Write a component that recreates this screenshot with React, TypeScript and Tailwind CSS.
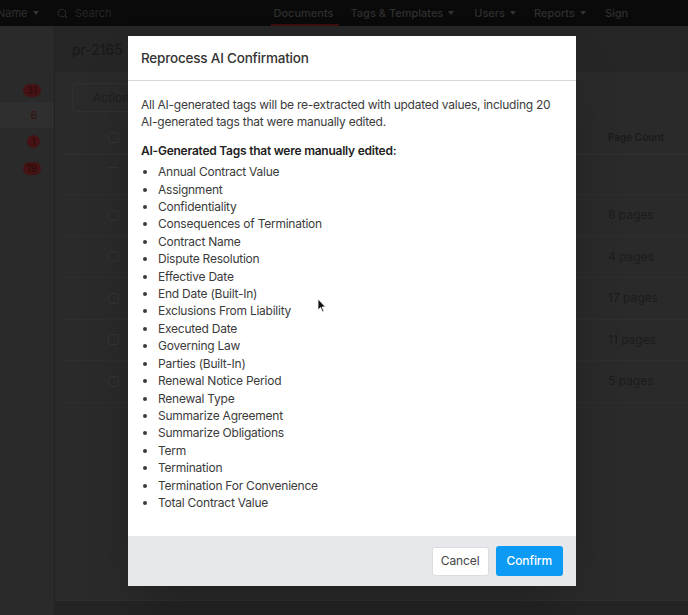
import React from 'react';

const tags = [
    'Annual Contract Value',
    'Assignment',
    'Confidentiality',
    'Consequences of Termination',
    'Contract Name',
    'Dispute Resolution',
    'Effective Date',
    'End Date (Built-In)',
    'Exclusions From Liability',
    'Executed Date',
    'Governing Law',
    'Parties (Built-In)',
    'Renewal Notice Period',
    'Renewal Type',
    'Summarize Agreement',
    'Summarize Obligations',
    'Term',
    'Termination',
    'Termination For Convenience',
    'Total Contract Value',
];

const pageRows = ['8 pages', '4 pages', '17 pages', '11 pages', '5 pages'];

const Caret = () => <span className="ml-[5px] inline-block border-x-[3px] border-t-[4px] border-x-transparent border-t-[#333] align-middle" />;

const App: React.FC = () => {
    return (
        <div className="relative h-[615px] w-[688px] overflow-hidden bg-[#262626] text-[12px]" style={{ fontFamily: 'Inter, "Noto Sans", sans-serif' }}>
            {/* navbar behind the overlay */}
            <div className="flex h-[26px] items-center bg-[#0a0a0a] text-[11px] text-[#2f2f2f]">
                <div className="flex w-[55px] items-center -ml-[3px]">Name<Caret /></div>
                <div className="flex items-center gap-[6px] pl-[4px]">
                    <svg width="13" height="13" viewBox="0 0 24 24" fill="none" stroke="#2a2a2a" strokeWidth="2"><circle cx="11" cy="11" r="7" /><path d="M20 20l-4-4" /></svg>
                    <span className="text-[#262626]">Search</span>
                </div>
                <div className="ml-[162px] flex h-full items-stretch font-medium">
                    <div className="relative flex items-center">
                        Documents
                        <div className="absolute bottom-0 left-[-3px] right-[-6px] h-[2px] bg-[#3a1010]" />
                    </div>
                    <div className="ml-[17px] flex items-center">Tags &amp; Templates<Caret /></div>
                    <div className="ml-[20px] flex items-center">Users<Caret /></div>
                    <div className="ml-[18px] flex items-center">Reports<Caret /></div>
                    <div className="ml-[19px] flex items-center">Sign</div>
                </div>
            </div>

            <div className="flex h-[589px]">
                {/* sidebar */}
                <div className="flex w-[55px] flex-col border-r border-[#222] bg-[#2a2a2a] pt-[52px]">
                    <div className="flex h-[24px] items-center justify-end pr-[13px]"><span className="rounded-full bg-[#451313] px-[4px] text-[10px] leading-[13px] text-[#2a0a0a]">31</span></div>
                    <div className="flex h-[26px] items-center justify-end bg-[#2f2f2f] pr-[17px] text-[10px] text-[#3a0e0e]">6</div>
                    <div className="flex h-[27px] items-center justify-end pr-[14px]"><span className="flex h-[13px] w-[13px] items-center justify-center rounded-full bg-[#451313] text-[9px] text-[#2a0a0a]">1</span></div>
                    <div className="flex h-[26px] items-center justify-end pr-[13px]"><span className="rounded-full bg-[#451313] px-[4px] text-[10px] leading-[13px] text-[#2a0a0a]">19</span></div>
                </div>

                {/* main content */}
                <div className="flex flex-1 flex-col">
                    <div className="flex h-[46px] items-center pl-[17px] text-[14px] text-[#181818]">pr-2165</div>
                    <div className="flex flex-1 flex-col bg-[#2a2a2a] pl-[8px]">
                        <div className="ml-[9px] mt-[11px] flex h-[29px] w-[80px] items-center rounded border border-[#303030] pl-[20px] text-[#1e1e1e]">Actions</div>
                        <div className="mt-[9px] flex h-[34px] items-center border-b border-[#303030] pr-[4px] pl-[45px]">
                            <span className="h-[11px] w-[11px] rounded-[2px] border border-[#333]" />
                            <span className="ml-auto w-[76px] text-[10px] font-semibold text-[#1a1a1a]">Page Count</span>
                        </div>
                        <div className="h-[40px] border-b border-[#2e2e2e] pl-[45px] pt-[12px]"><span className="block h-px w-[10px] bg-[#333]" /></div>
                        {pageRows.map((p) => (
                            <div key={p} className="flex h-[41.5px] items-center border-b border-[#2e2e2e] pr-[4px] pl-[45px]">
                                <span className="h-[11px] w-[11px] rounded-[2px] border border-[#333]" />
                                <span className="ml-auto w-[76px] text-[12px] text-[#1c1c1c]">{p}</span>
                            </div>
                        ))}
                        <div className="flex-1" />
                    </div>
                    <div className="h-[15px] border-t border-[#2f2f2f] bg-[#242424]" />
                </div>
            </div>

            {/* modal */}
            <div className="absolute inset-0 pl-[128px] pt-[36px]">
                <div className="w-[448px] overflow-hidden bg-white shadow-2xl">
                    <div className="flex h-[45px] items-center border-b border-[#d9d9d9] px-[13px] text-[13.5px] font-medium tracking-[-0.015em] text-[#333]">Reprocess AI Confirmation</div>
                    <div className="px-[13px] pb-[25px] pt-[15px] text-[12px] leading-[17.4px] tracking-[-0.02em] text-[#3b3b3b]">
                        <p>All AI-generated tags will be re-extracted with updated values, including 20 AI-generated tags that were manually edited.</p>
                        <p className="mt-[11px] font-semibold text-[#222]">AI-Generated Tags that were manually edited:</p>
                        <ul className="mt-[4px] list-disc pl-[17px]">
                            {tags.map((t) => (
                                <li key={t}>{t}</li>
                            ))}
                        </ul>
                    </div>
                    <div className="flex h-[50px] items-center justify-end gap-[7px] bg-[#e6e8eb] pr-[13px]">
                        <button className="h-[29px] rounded-[3px] border border-[#dcdcdc] bg-white px-[8px] text-[12px] tracking-[-0.01em] text-[#444]">Cancel</button>
                        <button className="h-[30px] rounded-[3px] bg-[#0b9bf5] px-[11px] text-[12px] font-medium tracking-[-0.01em] text-white">Confirm</button>
                    </div>
                </div>
            </div>

            {/* mouse pointer */}
            <svg className="absolute left-[317px] top-[298px]" width="10" height="15" viewBox="0 0 10 15">
                <path d="M1 1 L1 12 L3.5 9.5 L5.5 14 L7 13.3 L5 9 L8.5 9 Z" fill="#111" stroke="#fff" strokeWidth="0.8" />
            </svg>
        </div>
    );
};

export default App;
